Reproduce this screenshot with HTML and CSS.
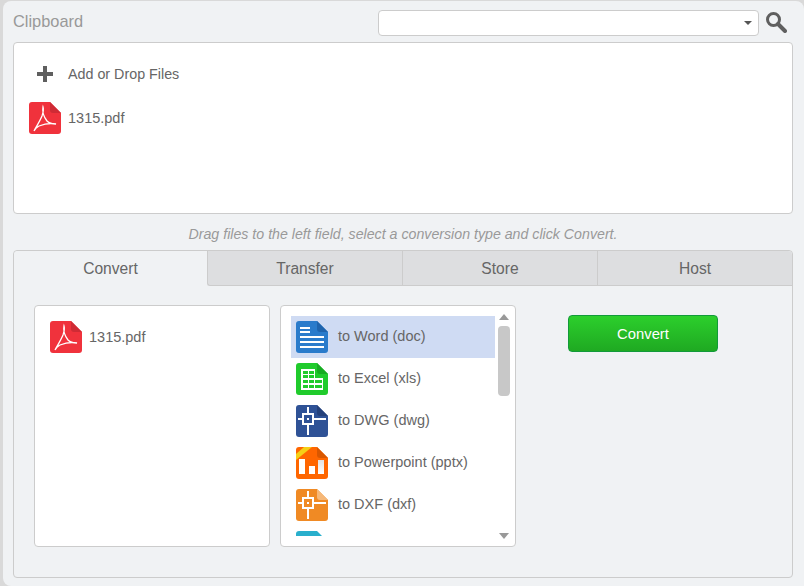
FILE: index.html
```html
<!DOCTYPE html>
<html lang="en">
<head>
<meta charset="UTF-8" />
<title>Clipboard</title>
<link rel="stylesheet" href="styles.css">
</head>
<body>

<svg class="defs" width="0" height="0">
  <symbol id="sheet" viewBox="0 0 32 32">
    <path d="M3 0H21L32 11V29a3 3 0 0 1-3 3H3a3 3 0 0 1-3-3V3a3 3 0 0 1 3-3z" />
  </symbol>
  <symbol id="acrobat" viewBox="0 0 32 32">
    <path fill="#f0323c" d="M3 0H21L32 11V29a3 3 0 0 1-3 3H3a3 3 0 0 1-3-3V3a3 3 0 0 1 3-3z" />
    <path fill="#cf2b35" d="M21 0L32 11H24a3 3 0 0 1-3-3z" />
    <path fill="none" stroke="#fff" stroke-width="1.3" d="M14 5c-1 5 1 10 4 14c2 2 6 3 9 3c-5-1-12 0-17 2c-2 1-4 3-5 5c2-4 6-10 8-15c1-3 2-6 1-9z" />
  </symbol>
  <symbol id="cad" viewBox="0 0 32 32">
    <path fill="none" stroke="#fff" stroke-width="2" d="M2 14H7M17 14H30M12 2V9M12 19V30" />
    <rect x="7" y="9" width="10" height="10" fill="none" stroke="#fff" stroke-width="2" />
    <rect x="11" y="13" width="2" height="2" fill="#fff" />
  </symbol>
  <linearGradient id="bar" x1="0" y1="0" x2="0" y2="1">
    <stop offset="0" stop-color="#e2e2e2" />
    <stop offset="1" stop-color="#fff" />
  </linearGradient>
</svg>

<div class="window">
  <div class="top">
    <span class="title">Clipboard</span>
    <div class="search">
      <div class="combo"><span class="caret"></span></div>
      <svg class="lens" width="22" height="22" viewBox="0 0 22 22">
        <circle cx="8.5" cy="8.5" r="6" fill="none" stroke="#5f5f5f" stroke-width="3" />
        <path d="M13 13L20 20" stroke="#5f5f5f" stroke-width="4" stroke-linecap="round" />
      </svg>
    </div>
  </div>

  <div class="clipboard">
    <div class="add-row">
      <svg class="plus" width="16" height="16" viewBox="0 0 16 16"><path fill="#5f5f5f" d="M6 0h4v6h6v4h-6v6H6v-6H0V6h6z" /></svg>
      <span>Add or Drop Files</span>
    </div>
    <div class="file file-top">
      <svg class="icon"><use href="#acrobat" /></svg>
      <span>1315.pdf</span>
    </div>
  </div>

  <p class="hint">Drag files to the left field, select a conversion type and click Convert.</p>

  <div class="tabs">
    <div class="tab-bar">
      <div class="tab active">Convert</div>
      <div class="tab">Transfer</div>
      <div class="tab">Store</div>
      <div class="tab">Host</div>
    </div>
    <div class="tab-body">
      <div class="box files">
        <div class="file">
          <svg class="icon"><use href="#acrobat" /></svg>
          <span>1315.pdf</span>
        </div>
      </div>

      <div class="box types">
        <ul class="type-list">
          <li class="selected">
            <svg class="icon" viewBox="0 0 32 32">
              <use href="#sheet" width="32" height="32" fill="#2a7bcb" />
              <path fill="#1f64ad" d="M21 0L32 11H24a3 3 0 0 1-3-3z" />
              <path fill="#fff" d="M4 6h10v2H4zM4 10h10v2H4zM4 15h24v2H4zM4 20h24v2H4zM4 25h24v2H4z" />
            </svg>
            <span>to Word (doc)</span>
          </li>
          <li>
            <svg class="icon" viewBox="0 0 32 32">
              <use href="#sheet" width="32" height="32" fill="#20cb2c" />
              <path fill="#17ab22" d="M21 0L32 11H24a3 3 0 0 1-3-3z" />
              <path fill="#fff" d="M5 6h14v9h8v12H5z" />
              <path fill="#20cb2c" d="M7 8h5v3H7zM13 8h5v3h-5zM7 12h5v3H7zM13 12h5v3h-5zM7 17h5v3H7zM13 17h5v3h-5zM19 17h7v3h-7zM7 22h5v3H7zM13 22h5v3h-5zM19 22h7v3h-7z" />
            </svg>
            <span>to Excel (xls)</span>
          </li>
          <li>
            <svg class="icon" viewBox="0 0 32 32">
              <use href="#sheet" width="32" height="32" fill="#2f5296" />
              <path fill="#25417a" d="M21 0L32 11H24a3 3 0 0 1-3-3z" />
              <use href="#cad" width="32" height="32" />
            </svg>
            <span>to DWG (dwg)</span>
          </li>
          <li>
            <svg class="icon" viewBox="0 0 32 32">
              <use href="#sheet" width="32" height="32" fill="#ff6600" />
              <path fill="#d95700" d="M21 0L32 11H24a3 3 0 0 1-3-3z" />
              <path fill="#f5d016" d="M0 7L8 0H16L0 13z" />
              <path fill="#fff" d="M3 12h6v15H3zM13 19h6v8h-6z" />
              <rect x="22" y="13" width="6" height="14" fill="url(#bar)" />
            </svg>
            <span>to Powerpoint (pptx)</span>
          </li>
          <li>
            <svg class="icon" viewBox="0 0 32 32">
              <use href="#sheet" width="32" height="32" fill="#f08a24" />
              <path fill="#f6b878" d="M21 0L32 11H24a3 3 0 0 1-3-3z" />
              <use href="#cad" width="32" height="32" />
            </svg>
            <span>to DXF (dxf)</span>
          </li>
          <li>
            <svg class="icon" viewBox="0 0 32 32">
              <use href="#sheet" width="32" height="32" fill="#29afcc" />
            </svg>
          </li>
        </ul>
        <div class="scroll">
          <span class="arrow up"></span>
          <div class="track"><div class="thumb"></div></div>
          <span class="arrow down"></span>
        </div>
      </div>

      <div class="actions">
        <button class="convert" type="button">Convert</button>
      </div>
    </div>
  </div>
</div>

</body>
</html>
```

FILE: styles.css
```css
html, body {
  height: 100%;
}
body {
  margin: 0;
  background: #d9d9d9;
  color: #666;
  font-family: "Liberation Sans", Arial, sans-serif;
  font-size: 14.3px;
  overflow: hidden;
}
.defs {
  position: absolute;
}
.window {
  box-sizing: border-box;
  height: 585px;
  margin: 1px 0 0 3px;
  padding: 0 11px 0 10px;
  background: #f0f2f4;
  border-radius: 8px 8px 0 8px;
}
.top {
  display: flex;
  justify-content: space-between;
  align-items: center;
  height: 41px;
}
.title {
  color: #999;
  font-size: 16.4px;
}
.search {
  display: flex;
  align-items: center;
  gap: 6px;
  margin-right: 6px;
  margin-top: 3px;
}
.lens {
  margin-top: -2px;
}
.combo {
  box-sizing: border-box;
  width: 381px;
  height: 26px;
  background: #fff;
  border: 1px solid #ccc;
  border-radius: 4px;
  position: relative;
}
.caret {
  position: absolute;
  right: 6px;
  top: 10px;
  border: 4px solid transparent;
  border-top: 4px solid #555;
  border-bottom: 0;
}
.clipboard {
  box-sizing: border-box;
  height: 172px;
  background: #fff;
  border: 1px solid #ccc;
  border-radius: 4px;
  padding: 23px 15px 0;
}
.add-row {
  display: flex;
  align-items: center;
  height: 16px;
  padding-left: 8px;
  gap: 15px;
}
.file {
  display: flex;
  align-items: center;
  gap: 7px;
  font-size: 14.5px;
}
.file-top {
  margin-top: 20px;
}
.icon {
  display: block;
  flex: none;
  width: 32px;
  height: 32px;
}
.hint {
  margin: 0;
  height: 36px;
  line-height: 41px;
  text-align: center;
  font-size: 14.2px;
  font-style: italic;
  color: #999;
}
.tabs {
  box-sizing: border-box;
  height: 328px;
  border: 1px solid #ccc;
  border-radius: 4px;
}
.tab-bar {
  display: grid;
  grid-template-columns: 193px 195px 195px 195px;
}
.tab {
  height: 34px;
  line-height: 36px;
  text-align: center;
  font-size: 15.6px;
  background: #dddee0;
  border-bottom: 1px solid #ccc;
  border-left: 1px solid #ccc;
}
.tab:first-child {
  border-left: 0;
  border-top-left-radius: 4px;
}
.tab:last-child {
  border-top-right-radius: 4px;
}
.tab.active {
  background: #f0f2f4;
  border-bottom-color: transparent;
}
.tab.active + .tab {
  border-bottom-left-radius: 3px;
}
.tab-body {
  display: flex;
  gap: 10px;
  padding: 19px 20px;
}
.box {
  box-sizing: border-box;
  width: 236px;
  height: 242px;
  background: #fff;
  border: 1px solid #ccc;
  border-radius: 4px;
  padding: 10px;
}
.files {
  padding: 15px;
}
.types {
  display: flex;
  gap: 3px;
  padding-right: 5px;
}
.type-list {
  flex: 1;
  margin: 0;
  padding: 0;
  list-style: none;
  overflow: hidden;
  font-size: 14.5px;
}
.type-list li {
  display: flex;
  align-items: center;
  gap: 10px;
  height: 42px;
  padding-left: 5px;
}
.type-list span {
  margin-bottom: 2px;
}
.type-list .selected {
  background: #cfdbf3;
}
.scroll {
  display: flex;
  flex-direction: column;
  align-items: center;
  width: 12px;
  margin: -2px 0 -3px;
}
.arrow {
  flex: none;
  border: 5px solid transparent;
  border-top-width: 0;
  border-bottom: 6px solid #999;
}
.arrow.down {
  border-bottom-width: 0;
  border-top: 6px solid #999;
}
.track {
  flex: 1;
  width: 100%;
  padding-top: 6px;
}
.thumb {
  height: 70px;
  background: #c8c8c8;
  border-radius: 4px;
}
.actions {
  padding: 10px 0 0 42px;
}
.convert {
  display: block;
  width: 150px;
  height: 37px;
  padding: 0;
  color: #fff;
  font: 14.8px "Liberation Sans", Arial, sans-serif;
  background: linear-gradient(#2ccf2c, #1fa922);
  border: 1px solid #129a3a;
  border-radius: 4px;
  cursor: pointer;
}
```
